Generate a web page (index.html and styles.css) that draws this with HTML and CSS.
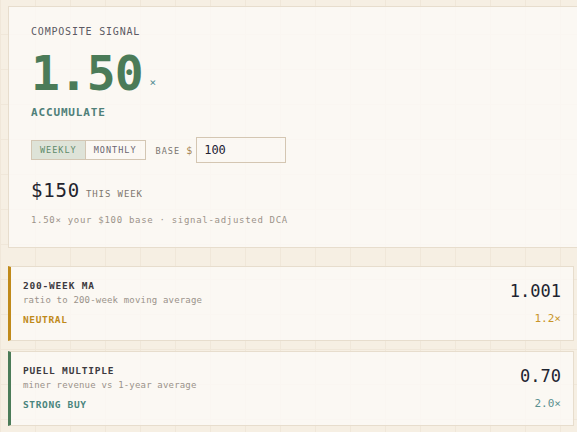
FILE: index.html
```html
<!DOCTYPE html>
<html lang="en">
<head>
    <meta charset="UTF-8">
    <meta name="viewport" content="width=device-width, initial-scale=1.0">
    <title>Composite Signal</title>
    <link rel="stylesheet" href="styles.css">
</head>
<body>
    <div class="page">
        <section class="signal-card">
            <div class="label">COMPOSITE SIGNAL</div>
            <div class="score">
                <span class="score-value">1.50</span>
                <span class="score-unit">×</span>
            </div>
            <div class="verdict">ACCUMULATE</div>

            <div class="controls">
                <div class="toggle">
                    <button class="toggle-btn active">WEEKLY</button>
                    <button class="toggle-btn">MONTHLY</button>
                </div>
                <label class="base-label" for="base">BASE <span class="dollar">$</span></label>
                <input class="base-input" id="base" type="text" value="100">
            </div>

            <div class="amount">
                <span class="amount-value">$150</span>
                <span class="amount-period">THIS WEEK</span>
            </div>
            <div class="note">1.50× your $100 base · signal-adjusted DCA</div>
        </section>

        <div class="metrics">
            <div class="metric neutral">
                <div class="metric-info">
                    <div class="metric-name">200-WEEK MA</div>
                    <div class="metric-desc">ratio to 200-week moving average</div>
                    <div class="metric-status">NEUTRAL</div>
                </div>
                <div class="metric-nums">
                    <div class="metric-value">1.001</div>
                    <div class="metric-mult">1.2×</div>
                </div>
            </div>
            <div class="metric buy">
                <div class="metric-info">
                    <div class="metric-name">PUELL MULTIPLE</div>
                    <div class="metric-desc">miner revenue vs 1-year average</div>
                    <div class="metric-status">STRONG BUY</div>
                </div>
                <div class="metric-nums">
                    <div class="metric-value">0.70</div>
                    <div class="metric-mult">2.0×</div>
                </div>
            </div>
        </div>
    </div>
</body>
</html>
```

FILE: styles.css
```css
html, body {
    overflow: hidden;
}
body {
    margin: 0;
    padding: 6px 3px 0 8px;
    font-family: "DejaVu Sans Mono", monospace;
    background-color: #f6efe3;
    background-image:
        linear-gradient(to right, #f0e7d9 1px, transparent 1px),
        linear-gradient(to bottom, #f0e7d9 1px, transparent 1px);
    background-size: 35px 35px;
    background-position: 0 0, 0 -1px;
    height: 432px;
    box-sizing: border-box;
}
.signal-card {
    background: rgba(252, 250, 247, 0.78);
    border: 1px solid #e7ddcd;
    margin-right: -14px;
    padding: 19px 22px 21px;
}
.label {
    font-size: 10px;
    line-height: 12px;
    letter-spacing: 0.8px;
    color: #5c5a63;
}
.score {
    display: flex;
    align-items: baseline;
    margin-top: 11px;
}
.score-value {
    font-size: 48px;
    line-height: 48px;
    font-weight: bold;
    letter-spacing: -1px;
    color: #4b7b58;
}
.score-unit {
    font-size: 11px;
    margin-left: 7px;
    position: relative;
    top: -4px;
    color: #4f8a90;
}
.verdict {
    margin-top: 9px;
    font-size: 11px;
    line-height: 14px;
    font-weight: bold;
    letter-spacing: 0.85px;
    color: #4f8079;
}
.controls {
    display: flex;
    align-items: center;
    margin-top: 17px;
}
.toggle {
    display: flex;
    border: 1px solid #d3c6b3;
}
.toggle-btn {
    font-family: inherit;
    font-size: 8.5px;
    letter-spacing: 1px;
    height: 18px;
    padding: 0 8px;
    border: none;
    background: transparent;
    color: #6a6570;
}
.toggle-btn + .toggle-btn {
    border-left: 1px solid #d3c6b3;
}
.toggle-btn.active {
    background: #dee3d8;
    color: #5f8a6a;
}
.base-label {
    margin-left: 10px;
    font-size: 8.5px;
    letter-spacing: 1px;
    color: #7a7570;
}
.dollar {
    color: #a88858;
    font-size: 10px;
}
.base-input {
    margin-left: 3px;
    width: 90px;
    height: 26px;
    box-sizing: border-box;
    padding: 0 7px;
    font-family: inherit;
    font-size: 12px;
    color: #222233;
    background: transparent;
    border: 1px solid #d4c6b2;
    outline: none;
}
.amount {
    display: flex;
    align-items: baseline;
    margin-top: 16px;
}
.amount-value {
    font-size: 19px;
    line-height: 22px;
    letter-spacing: 0.8px;
    color: #23232d;
}
.amount-period {
    margin-left: 6px;
    font-size: 9px;
    letter-spacing: 0.9px;
    color: #7d766e;
}
.note {
    margin-top: 13px;
    font-size: 9px;
    line-height: 12px;
    letter-spacing: 0.7px;
    color: #9b938a;
}
.metrics {
    display: flex;
    flex-direction: column;
    gap: 10px;
    margin-top: 18px;
}
.metric {
    display: flex;
    justify-content: space-between;
    background: rgba(252, 250, 247, 0.78);
    border: 1px solid #e7ddcd;
    border-left: 3px solid #c08a1a;
    padding: 13px 12px 14px 12px;
}
.metric.buy {
    border-left-color: #4b7b58;
}
.metric-name {
    font-size: 9.5px;
    line-height: 12px;
    font-weight: bold;
    letter-spacing: 0.8px;
    color: #3d3a40;
}
.metric-desc {
    margin-top: 2px;
    font-size: 9px;
    line-height: 12px;
    letter-spacing: 0.18px;
    color: #9a928a;
}
.metric-status {
    margin-top: 8px;
    font-size: 9.5px;
    line-height: 12px;
    font-weight: bold;
    letter-spacing: 0.65px;
    color: #c08a1a;
}
.metric.buy .metric-status {
    color: #4a857d;
}
.metric-nums {
    text-align: right;
    padding-top: 1px;
}
.metric-value {
    font-size: 17px;
    line-height: 20px;
    color: #1f2430;
}
.metric-mult {
    margin-top: 11px;
    font-size: 11px;
    line-height: 14px;
    color: #c9952a;
}
.metric.buy .metric-mult {
    color: #5a9090;
}
```
